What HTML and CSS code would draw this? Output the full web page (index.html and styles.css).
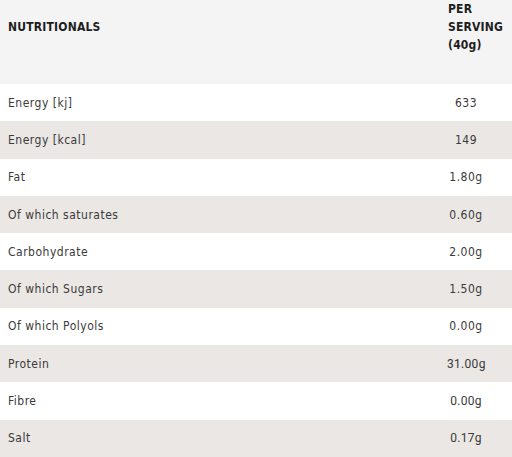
FILE: index.html
```html
<!DOCTYPE html>
<html>
<head>
<meta charset="utf-8">
<link rel="stylesheet" href="styles.css">
</head>
<body>
<table class="nutri">
  <thead>
    <tr class="head">
      <th class="label-h">NUTRITIONALS</th>
      <th class="value-h">PER<br>SERVING<br>(40g)</th>
    </tr>
  </thead>
  <tbody>
    <tr><td class="label">Energy [kj]</td><td class="value"><span>633</span></td></tr>
    <tr><td class="label">Energy [kcal]</td><td class="value"><span>149</span></td></tr>
    <tr><td class="label">Fat</td><td class="value"><span>1.80g</span></td></tr>
    <tr><td class="label">Of which saturates</td><td class="value"><span>0.60g</span></td></tr>
    <tr><td class="label">Carbohydrate</td><td class="value"><span>2.00g</span></td></tr>
    <tr><td class="label">Of which Sugars</td><td class="value"><span>1.50g</span></td></tr>
    <tr><td class="label">Of which Polyols</td><td class="value"><span>0.00g</span></td></tr>
    <tr><td class="label">Protein</td><td class="value"><span class="alt">31.00g</span></td></tr>
    <tr><td class="label">Fibre</td><td class="value"><span class="alt">0.00g</span></td></tr>
    <tr><td class="label">Salt</td><td class="value"><span class="alt">0.17g</span></td></tr>
  </tbody>
</table>
</body>
</html>
```
FILE: styles.css
```css
html, body {
  margin: 0;
  padding: 0;
  background: #ffffff;
}
body {
  font-family: "DejaVu Sans Condensed", "DejaVu Sans", sans-serif;
  color: #333333;
  width: 512px;
  height: 457px;
  overflow: hidden;
}
.nutri {
  width: 512px;
  border-collapse: collapse;
  border-spacing: 0;
}
.head {
  background: #f4f4f4;
  height: 84px;
}
.head th {
  font-size: 12px;
  font-weight: bold;
  letter-spacing: 0.2px;
  color: #1e1e1e;
  text-align: left;
  line-height: 18px;
  padding: 0 0 30px 0;
  vertical-align: middle;
}
.label-h {
  padding-left: 8px !important;
}
.value-h {
  width: 64px;
  padding-left: 1px !important;
}
tbody tr {
  height: 37.3px;
}
tbody tr:nth-child(even) {
  background: #eae7e4;
}
td {
  padding: 0;
  font-size: 12px;
  letter-spacing: 0.5px;
  color: #3a3a3a;
  vertical-align: middle;
}
.label {
  padding-left: 8px;
}
.value span {
  display: inline-block;
  width: 38px;
  text-align: center;
}
.value .alt {
  font-family: Roboto, sans-serif;
  letter-spacing: 0.3px;
}
```
